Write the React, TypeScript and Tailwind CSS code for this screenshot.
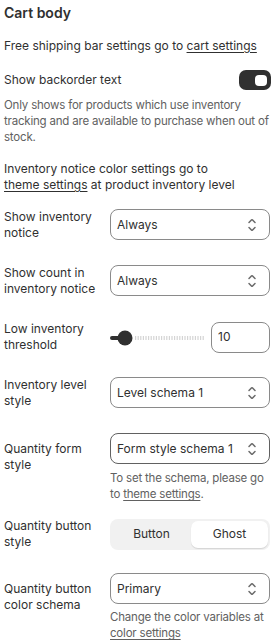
import React from "react";

const ChevronIcon = () => (
  <svg viewBox="0 0 20 20" className="w-5 h-5 shrink-0" fill="#6b6b6b">
    <path d="M10.884 4.323a1.25 1.25 0 0 0-1.768 0l-2.646 2.647a.75.75 0 0 0 1.06 1.06l2.47-2.47 2.47 2.47a.75.75 0 1 0 1.06-1.06l-2.646-2.647Z" />
    <path d="m13.53 13.03-2.646 2.647a1.25 1.25 0 0 1-1.768 0l-2.646-2.647a.75.75 0 0 1 1.06-1.06l2.47 2.47 2.47-2.47a.75.75 0 0 1 1.06 1.06Z" />
  </svg>
);

const Select = ({ value, dark }: { value: string; dark?: boolean }) => (
  <div
    className={`h-[31px] w-full flex items-center justify-between pl-[6px] pr-[7px] rounded-[8px] border bg-white ${
      dark ? "border-[#616161]" : "border-[#8a8a8a]"
    }`}
  >
    <span className="text-[12px] leading-4 text-[#303030] whitespace-nowrap">{value}</span>
    <ChevronIcon />
  </div>
);

const Label = ({ children, top }: { children: React.ReactNode; top?: boolean }) => (
  <div
    className={`text-[12px] leading-4 text-[#303030] whitespace-nowrap ${top ? "self-start pt-2" : "self-center"}`}
  >
    {children}
  </div>
);

const Slider = () => {
  const ticks: number[] = [];
  for (let x = 25; x <= 93; x += 2.6) ticks.push(x);
  return (
    <svg width="95" height="31" viewBox="0 0 95 31" className="shrink-0">
      {ticks.map((x, i) => (
        <rect key={i} x={x} y={14} width={1.2} height={4} fill="#d4d4d4" />
      ))}
      <rect x={0} y={14} width={15} height={4} rx={2} fill="#303030" />
      <circle cx={15} cy={16} r={7.5} fill="#303030" />
    </svg>
  );
};

export default function App() {
  return (
    <div
      className="w-[278px] h-[644px] bg-white pl-[4px] pr-[8px] text-[#303030] overflow-hidden"
      style={{ fontFamily: "Inter, 'Noto Sans', sans-serif" }}
    >
      <h2 className="pt-[3px] text-[14px] leading-5 font-semibold text-[#303030]">Cart body</h2>

      <p className="mt-[15px] text-[12px] leading-4 whitespace-nowrap">
        Free shipping bar settings go to <span className="underline underline-offset-2">cart settings</span>
      </p>

      <div className="mt-[16px] h-5 flex items-center justify-between">
        <span className="text-[12px] leading-4">Show backorder text</span>
        <div className="w-[32px] h-5 rounded-[7px] bg-[#303030] flex items-center justify-end pr-[4px] mr-[-1px]">
          <div className="w-[12px] h-[11px] rounded-[4px] bg-white" />
        </div>
      </div>

      <p className="mt-[7px] text-[11.5px] tracking-[-0.2px] leading-4 text-[#616161] whitespace-nowrap">
        Only shows for products which use inventory
        <br />
        tracking and are available to purchase when out of
        <br />
        stock.
      </p>

      <p className="mt-[16px] text-[12px] leading-4 whitespace-nowrap">
        Inventory notice color settings go to
        <br />
        <span className="underline underline-offset-2">theme settings</span> at product inventory level
      </p>

      <div className="mt-[16px] grid grid-cols-[100px_160px] gap-x-[6px]">
        <Label>
          Show inventory
          <br />
          notice
        </Label>
        <Select value="Always" />
      </div>

      <div className="mt-[24px] grid grid-cols-[100px_160px] gap-x-[6px]">
        <Label>
          Show count in
          <br />
          inventory notice
        </Label>
        <Select value="Always" />
      </div>

      <div className="mt-[24px] grid grid-cols-[100px_160px] gap-x-[6px]">
        <Label>
          Low inventory
          <br />
          threshold
        </Label>
        <div className="flex items-center">
          <Slider />
          <div className="ml-[6px] w-[59px] h-[31px] rounded-[8px] border border-[#8a8a8a] flex items-center pl-[6px] text-[12px] leading-4">
            10
          </div>
        </div>
      </div>

      <div className="mt-[24px] grid grid-cols-[100px_160px] gap-x-[6px]">
        <Label>
          Inventory level
          <br />
          style
        </Label>
        <Select value="Level schema 1" />
      </div>

      <div className="mt-[24px] grid grid-cols-[100px_160px] gap-x-[6px]">
        <Label top>
          Quantity form
          <br />
          style
        </Label>
        <div>
          <Select value="Form style schema 1" dark />
          <p className="mt-[6px] text-[11.5px] tracking-[-0.2px] leading-4 text-[#616161] whitespace-nowrap">
            To set the schema, please go
            <br />
            to <span className="underline underline-offset-2">theme settings</span>.
          </p>
        </div>
      </div>

      <div className="mt-[16px] grid grid-cols-[100px_160px] gap-x-[6px]">
        <Label>
          Quantity button
          <br />
          style
        </Label>
        <div className="h-[31px] rounded-[8px] bg-[#f1f1f1] p-[2px] flex text-[12px] leading-4 self-center">
          <div className="flex-1 flex items-center justify-center text-[#303030]">Button</div>
          <div className="w-[77px] rounded-[7px] bg-white shadow-[0_1px_1px_rgba(0,0,0,0.12)] flex items-center justify-center text-[#303030]">
            Ghost
          </div>
        </div>
      </div>

      <div className="mt-[23px] grid grid-cols-[100px_160px] gap-x-[6px]">
        <Label top>
          Quantity button
          <br />
          color schema
        </Label>
        <div>
          <Select value="Primary" />
          <p className="mt-[5px] text-[11.5px] tracking-[-0.2px] leading-4 text-[#616161] whitespace-nowrap">
            Change the color variables at
            <br />
            <span className="underline underline-offset-2">color settings</span>
          </p>
        </div>
      </div>
    </div>
  );
}
